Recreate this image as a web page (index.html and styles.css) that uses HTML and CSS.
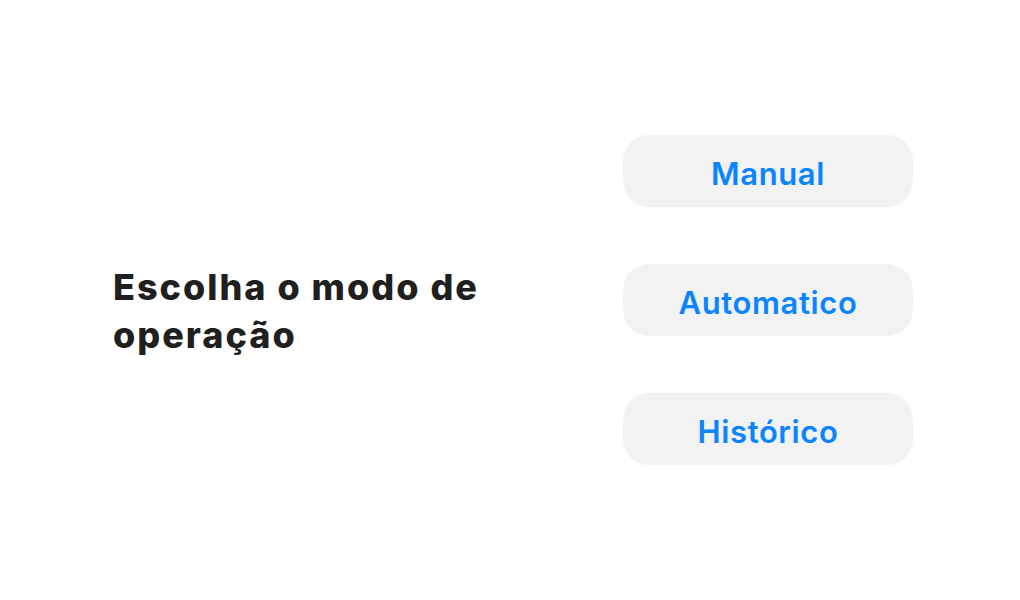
FILE: index.html
```html
<!DOCTYPE html>
<html lang="pt">
<head>
<meta charset="utf-8">
<link rel="stylesheet" href="styles.css">
</head>
<body>
<main class="screen">
  <div class="intro">
    <h1 class="title">Escolha o modo de operação</h1>
  </div>
  <nav class="modes">
    <button class="mode">Manual</button>
    <button class="mode">Automatico</button>
    <button class="mode">Histórico</button>
  </nav>
</main>
</body>
</html>
```
FILE: styles.css
```css
html, body {
  margin: 0;
  padding: 0;
  background: #ffffff;
}
.screen {
  width: 1020px;
  height: 600px;
  display: flex;
  align-items: center;
  padding-left: 113px;
  box-sizing: border-box;
  font-family: Inter, "Noto Sans", sans-serif;
}
.intro {
  flex: 0 0 510px;
  padding-top: 22px;
}
.title {
  margin: 0;
  width: 400px;
  font-size: 36px;
  font-weight: 800;
  line-height: 48px;
  letter-spacing: 2px;
  color: #1f1f1f;
}
.modes {
  display: flex;
  flex-direction: column;
  gap: 57px;
}
.mode {
  width: 290px;
  height: 72px;
  border: none;
  border-radius: 26px;
  background: #f2f2f2;
  color: #0a84ff;
  font-family: Inter, "Noto Sans", sans-serif;
  font-size: 31px;
  font-weight: 600;
  letter-spacing: 0.6px;
  padding: 4px 0 0;
  cursor: pointer;
}
```
